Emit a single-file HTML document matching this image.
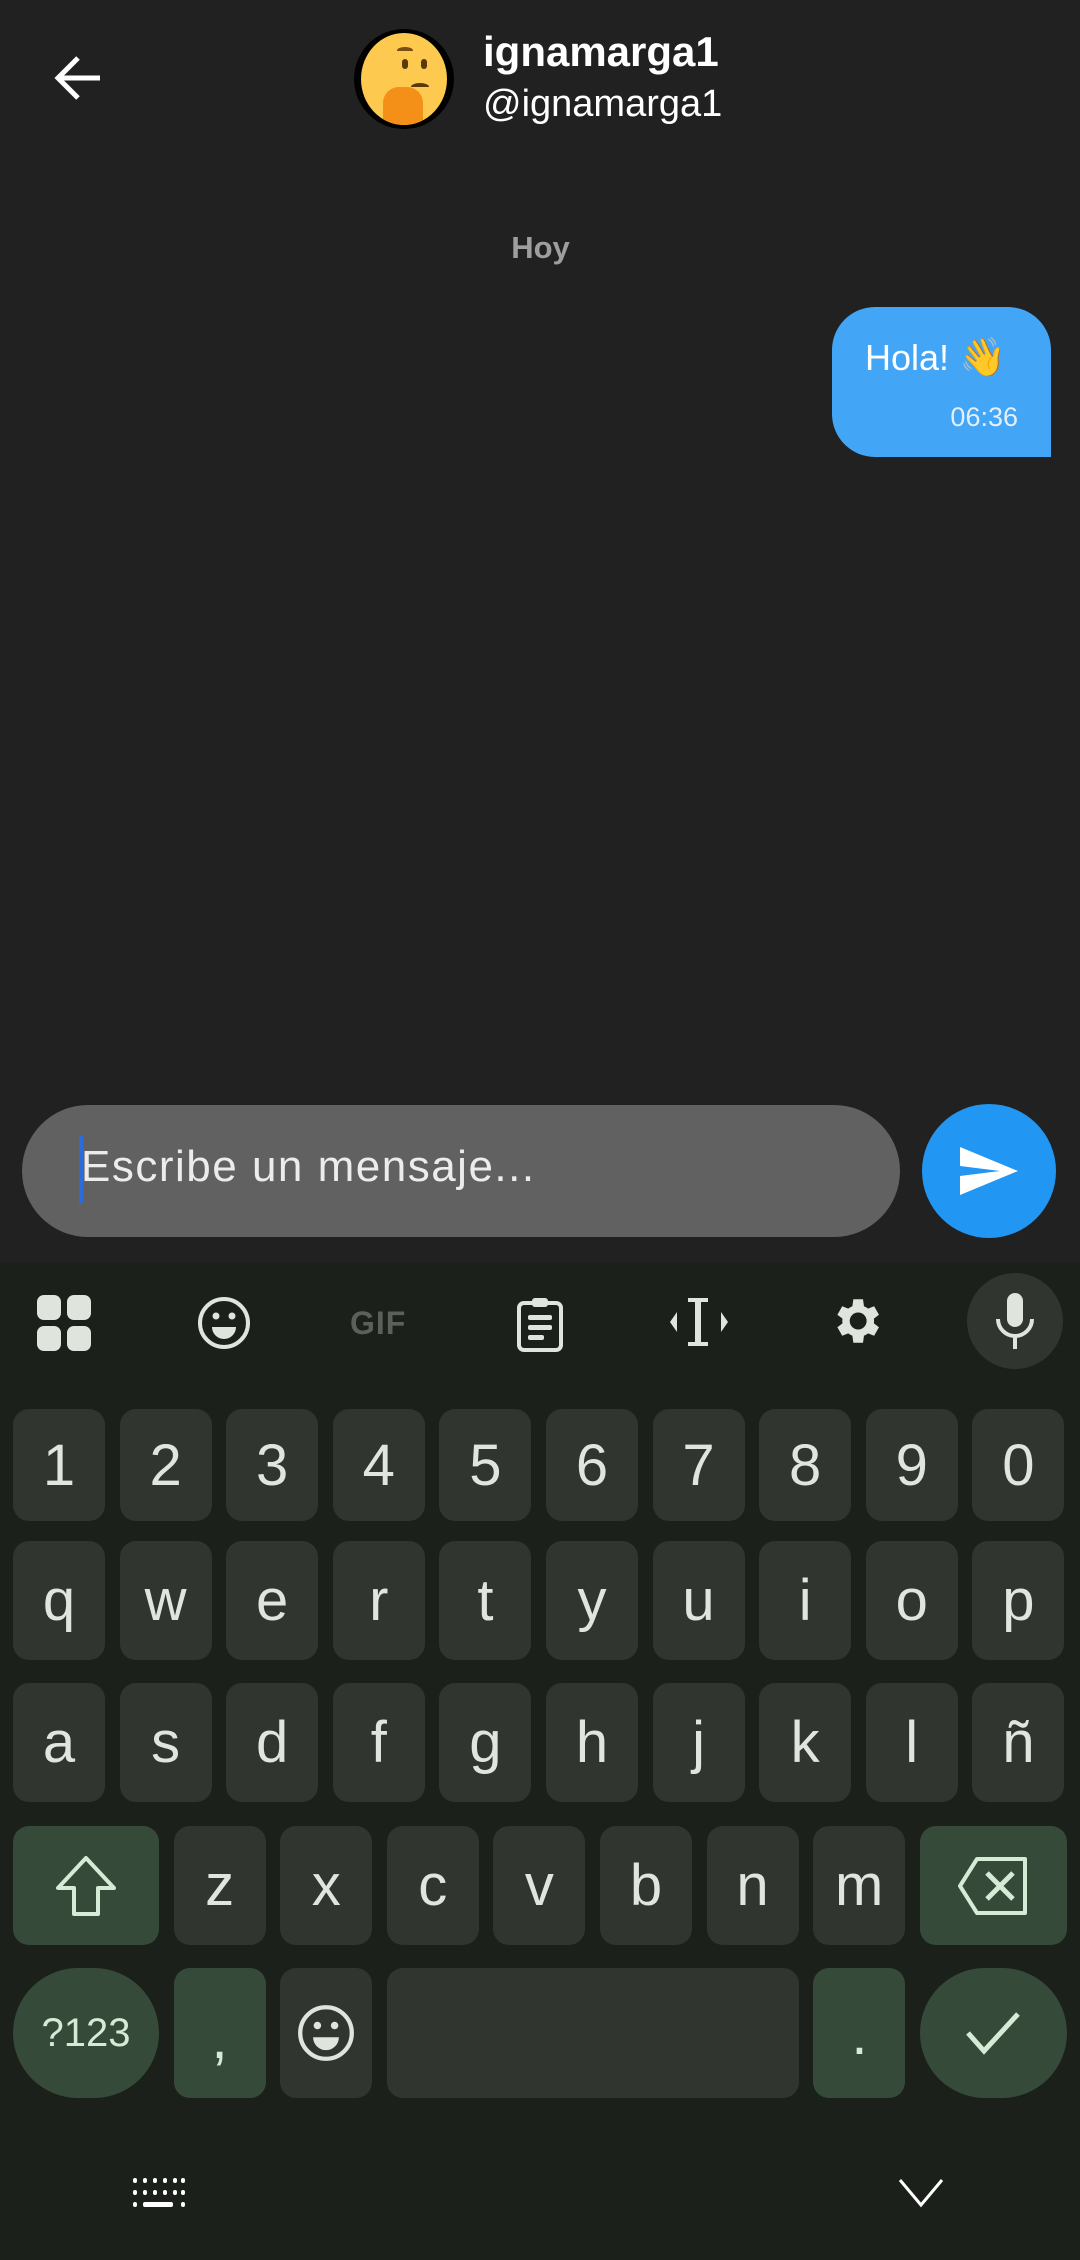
<!DOCTYPE html>
<html><head><meta charset="utf-8"><style>
*{margin:0;padding:0;box-sizing:border-box}
body{width:1080px;height:2260px;background:#212121;position:relative;overflow:hidden;font-family:"Liberation Sans","Noto Sans CJK JP",sans-serif;color:#fff}
.abs{position:absolute}
.kb{position:absolute;left:0;top:1263px;width:1080px;height:997px;background:#1c201b}
.row{position:absolute;left:13px;width:1054px;display:flex;gap:14.6px}
.k{flex:0 0 92px;background:#303530;border-radius:16px;color:#e1e5de;font-size:58px;display:flex;align-items:center;justify-content:center;font-family:"Liberation Sans",sans-serif}
.g{background:#364a3a}
</style></head><body>
<svg class="abs" style="left:52px;top:54px" width="52" height="48" viewBox="0 0 52 48"><path d="M48 24H6M26 4L6 24l20 20" stroke="#fff" stroke-width="5" fill="none"/></svg>
<div class="abs" style="left:354px;top:29px;width:100px;height:100px;border-radius:50%;background:#000"></div>
<div class="abs" style="left:361px;top:33px;width:86px;height:92px;border-radius:50%;background:#fdca4f;overflow:hidden">
<div class="abs" style="left:36px;top:14px;width:16px;height:7px;border-top:4px solid #7a4d10;border-radius:50% 50% 0 0"></div>
<div class="abs" style="left:41px;top:26px;width:6px;height:10px;background:#5a3a0a;border-radius:3px"></div>
<div class="abs" style="left:60px;top:26px;width:6px;height:10px;background:#5a3a0a;border-radius:3px"></div>
<div class="abs" style="left:50px;top:50px;width:18px;height:8px;border-top:4px solid #5a3a0a;border-radius:50% 50% 0 0"></div>
<div class="abs" style="left:22px;top:54px;width:40px;height:40px;background:#f49017;border-radius:40% 40% 10% 10%"></div></div>
<div class="abs" style="left:483px;top:28px;font-size:42px;font-weight:bold">ignamarga1</div>
<div class="abs" style="left:483px;top:83px;font-size:38px">@ignamarga1</div>
<div class="abs" style="left:0;width:1080px;top:230px;text-align:center;font-size:31px;font-weight:bold;color:#9e9e9e;padding-left:1px">Hoy</div>
<div class="abs" style="left:832px;top:307px;width:219px;height:150px;background:#42a5f5;border-radius:43px 43px 0 43px"></div>
<div class="abs" style="left:865px;top:336px;font-size:36px">Hola! <span style="font-size:38px">👋</span></div>
<div class="abs" style="left:918px;top:402px;width:100px;text-align:right;font-size:27px;color:#e3f0fc">06:36</div>
<div class="abs" style="left:22px;top:1105px;width:878px;height:132px;border-radius:66px;background:#616161"></div>
<div class="abs" style="left:79px;top:1136px;width:4px;height:68px;background:#2f6bd8"></div>
<div class="abs" style="left:81px;top:1142px;font-size:44px;letter-spacing:1.5px;color:#ececec">Escribe un mensaje...</div>
<div class="abs" style="left:922px;top:1104px;width:134px;height:134px;border-radius:50%;background:#2196f3"></div>
<svg class="abs" style="left:958px;top:1145px" width="62" height="52" viewBox="0 0 62 52"><path d="M2 2L60 26L2 50L2 31L42 26L2 21Z" fill="#fff"/></svg>
<div class="kb">
<svg class="abs" style="left:37px;top:32px" width="54" height="56" viewBox="0 0 54 56"><g fill="#dfe4dd"><rect x="0" y="0" width="24" height="25" rx="7"/><rect x="30" y="0" width="24" height="25" rx="7"/><rect x="0" y="31" width="24" height="25" rx="7"/><rect x="30" y="31" width="24" height="25" rx="7"/></g></svg>
<svg class="abs" style="left:197px;top:33px" width="54" height="54" viewBox="0 0 54 54"><circle cx="27" cy="27" r="24" stroke="#dfe4dd" stroke-width="4" fill="none"/><circle cx="19" cy="20" r="3.5" fill="#dfe4dd"/><circle cx="35" cy="20" r="3.5" fill="#dfe4dd"/><path d="M15 31h24a12 12 0 0 1-24 0z" fill="#dfe4dd"/></svg>
<div class="abs" style="left:350px;top:42px;font-size:32px;font-weight:bold;color:#5b605a;letter-spacing:1px">GIF</div>
<svg class="abs" style="left:516px;top:34px" width="48" height="56" viewBox="0 0 48 56"><rect x="3" y="6" width="42" height="47" rx="5" stroke="#dfe4dd" stroke-width="4" fill="none"/><rect x="16" y="1" width="16" height="9" rx="3" fill="#dfe4dd"/><g fill="#dfe4dd"><rect x="12" y="18" width="24" height="5" rx="2"/><rect x="12" y="28" width="24" height="5" rx="2"/><rect x="12" y="38" width="16" height="5" rx="2"/></g></svg>
<svg class="abs" style="left:670px;top:35px" width="58" height="48" viewBox="0 0 58 48"><g fill="#dfe4dd"><path d="M0 24l7-10v20z"/><path d="M58 24l-7-10v20z"/><rect x="18" y="0" width="20" height="4"/><rect x="18" y="44" width="20" height="4"/><rect x="25" y="0" width="6" height="48"/></g></svg>
<svg class="abs" style="left:827px;top:29px" width="58" height="58" viewBox="0 0 24 24"><path fill="#dfe4dd" d="M19.4 13a7.5 7.5 0 0 0 0-2l2.1-1.6-2-3.5-2.5 1a7.3 7.3 0 0 0-1.7-1L14.9 3h-4l-.4 2.9a7.3 7.3 0 0 0-1.7 1l-2.5-1-2 3.5L6.4 11a7.5 7.5 0 0 0 0 2l-2.1 1.6 2 3.5 2.5-1a7.3 7.3 0 0 0 1.7 1l.4 2.9h4l.4-2.9a7.3 7.3 0 0 0 1.7-1l2.5 1 2-3.5zM12.9 15.5a3.5 3.5 0 1 1 0-7 3.5 3.5 0 0 1 0 7z"/></svg>
<div class="abs" style="left:967px;top:10px;width:96px;height:96px;border-radius:50%;background:#303530"></div>
<svg class="abs" style="left:995px;top:30px" width="40" height="58" viewBox="0 0 40 58"><rect x="12" y="0" width="16" height="34" rx="8" fill="#dfe4dd"/><path d="M3 26a17 17 0 0 0 34 0M20 43v13" stroke="#dfe4dd" stroke-width="4" fill="none"/></svg>
<div class="row" style="top:146px;height:112px"><div class="k">1</div><div class="k">2</div><div class="k">3</div><div class="k">4</div><div class="k">5</div><div class="k">6</div><div class="k">7</div><div class="k">8</div><div class="k">9</div><div class="k">0</div></div>
<div class="row" style="top:278px;height:119px"><div class="k">q</div><div class="k">w</div><div class="k">e</div><div class="k">r</div><div class="k">t</div><div class="k">y</div><div class="k">u</div><div class="k">i</div><div class="k">o</div><div class="k">p</div></div>
<div class="row" style="top:420px;height:119px"><div class="k">a</div><div class="k">s</div><div class="k">d</div><div class="k">f</div><div class="k">g</div><div class="k">h</div><div class="k">j</div><div class="k">k</div><div class="k">l</div><div class="k">ñ</div></div>
<div class="row" style="top:563px;height:119px">
<div class="k g" style="flex-basis:146px"><svg width="64" height="62" viewBox="0 0 64 62"><path d="M32 3L4 33h16v26h24V33h16z" stroke="#d6ead6" stroke-width="4" fill="none" stroke-linejoin="round"/></svg></div>
<div class="k">z</div><div class="k">x</div><div class="k">c</div><div class="k">v</div><div class="k">b</div><div class="k">n</div><div class="k">m</div>
<div class="k g" style="flex-basis:147px"><svg width="72" height="60" viewBox="0 0 72 60"><path d="M20 3h48v54H20L3 30z" stroke="#d6ead6" stroke-width="4" fill="none" stroke-linejoin="round"/><path d="M30 17l26 26M56 17L30 43" stroke="#d6ead6" stroke-width="5"/></svg></div>
</div>
<div class="row" style="top:705px;height:130px">
<div class="k g" style="flex-basis:146px;border-radius:65px;font-size:40px;color:#d6ead6">?123</div>
<div class="k g" style="align-items:flex-end;padding-bottom:26px;color:#d6ead6">,</div>
<div class="k"><svg width="58" height="58" viewBox="0 0 54 54"><circle cx="27" cy="27" r="24" stroke="#dfe4dd" stroke-width="4" fill="none"/><circle cx="19" cy="20" r="3.5" fill="#dfe4dd"/><circle cx="35" cy="20" r="3.5" fill="#dfe4dd"/><path d="M15 31h24a12 12 0 0 1-24 0z" fill="#dfe4dd"/></svg></div>
<div class="k" style="flex-basis:412px"></div>
<div class="k g" style="align-items:flex-end;padding-bottom:30px;color:#d6ead6">.</div>
<div class="k g" style="flex-basis:147px;border-radius:65px"><svg width="56" height="44" viewBox="0 0 56 44"><path d="M3 22l16 18L53 3" stroke="#d6ead6" stroke-width="5" fill="none"/></svg></div>
</div>
<svg class="abs" style="left:133px;top:915px" width="52" height="30" viewBox="0 0 52 30"><g fill="#fff"><rect x="0" y="0" width="4" height="5" rx="2"/><rect x="10" y="0" width="4" height="5" rx="2"/><rect x="20" y="0" width="4" height="5" rx="2"/><rect x="30" y="0" width="4" height="5" rx="2"/><rect x="40" y="0" width="4" height="5" rx="2"/><rect x="48" y="0" width="4" height="5" rx="2"/><rect x="0" y="12" width="4" height="5" rx="2"/><rect x="10" y="12" width="4" height="5" rx="2"/><rect x="20" y="12" width="4" height="5" rx="2"/><rect x="30" y="12" width="4" height="5" rx="2"/><rect x="40" y="12" width="4" height="5" rx="2"/><rect x="48" y="12" width="4" height="5" rx="2"/><rect x="0" y="24" width="4" height="5" rx="2"/><rect x="10" y="24" width="30" height="5" rx="2"/><rect x="48" y="24" width="4" height="5" rx="2"/></g></svg>
<svg class="abs" style="left:898px;top:915px" width="46" height="30" viewBox="0 0 46 30"><path d="M2 2l21 25L44 2" stroke="#fff" stroke-width="3" fill="none"/></svg>
</div>
</body></html>
